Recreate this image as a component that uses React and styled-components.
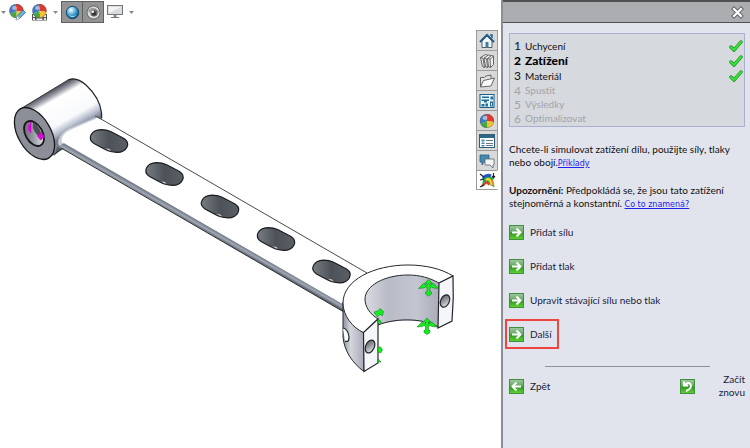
import React from "react";
import styled, { createGlobalStyle, css } from "styled-components";

const GlobalStyle = createGlobalStyle`
  * {
    box-sizing: border-box;
  }
  body {
    margin: 0;
    background: #ffffff;
    font-family: Lato, "Open Sans", sans-serif;
    font-size: 10px;
    font-variant-ligatures: none;
    color: #101014;
  }
  svg {
    display: block;
  }
`;

const Page = styled.div`
  display: flex;
  min-height: 100vh;
`;

const Workspace = styled.main`
  flex: 1;
  min-width: 0;
`;

const Toolbar = styled.div`
  display: flex;
  align-items: center;
  height: 24px;
`;

const ToolButton = styled.button`
  display: flex;
  align-items: center;
  justify-content: center;
  width: 22px;
  height: 22px;
  padding: 0;
  border: 0;
  background: none;
  ${(props) =>
    props.$pressed &&
    css`
      border: 1px solid #5f5f5f;
      background: #929394;
    `};
`;

const DropButton = styled(ToolButton)`
  width: ${(props) => (props.$wide ? "11px" : "6px")};
`;

const ToggleGroup = styled.div`
  display: flex;
  button:last-child {
    width: 21px;
    border-left: 0;
  }
`;

const Model = styled.svg`
  width: 100%;
  height: auto;
`;

const TabRail = styled.nav`
  display: flex;
  flex-direction: column;
  width: 25px;
  padding: 30px 3px 0 0;
`;

const Tab = styled.button`
  display: flex;
  align-items: center;
  justify-content: center;
  height: 20px;
  padding: 0;
  border: 1px solid #9b9b9b;
  border-bottom-width: ${(props) => (props.$active ? "1px" : "0")};
  border-right-color: ${(props) => (props.$active ? "#ffffff" : "#9b9b9b")};
  background: ${(props) => (props.$active ? "#ffffff" : "#d9d9d9")};
`;

const Panel = styled.aside`
  width: 249px;
  border-left: 2px solid #8b8e96;
  background: #e1e4ec;
`;

const TitleBar = styled.header`
  display: flex;
  align-items: center;
  justify-content: flex-end;
  height: 23px;
  padding-right: 6px;
  border-top: 2px solid #4f5052;
  border-bottom: 1px solid #4f5052;
  background: #acadb1;
`;

const CloseButton = styled.button`
  padding: 0;
  border: 0;
  background: none;
`;

const PanelBody = styled.div`
  padding: 10px 5px 0 6px;
`;

const Steps = styled.ol`
  margin: 0 0 16px;
  padding: 4px 1px 1px 4px;
  border: 1px solid #a9b0cf;
  background: #d6d9de;
  list-style: none;
`;

const Step = styled.li`
  display: flex;
  align-items: center;
  height: ${(props) => (props.$pending ? "14px" : "15px")};
  color: ${(props) => (props.$pending ? "#a2a4a8" : "#101014")};
  ${(props) =>
    props.$current &&
    css`
      color: #000000;
      font-size: 12px;
      font-weight: 900;
    `};
`;

const StepNumber = styled.span`
  width: 11px;
  font-size: 12px;
`;

const StepName = styled.span`
  flex: 1;
`;

const Notes = styled.section`
  display: flex;
  flex-direction: column;
  gap: 15px;
  margin-bottom: 7px;
`;

const Paragraph = styled.p`
  margin: 0;
  line-height: 13px;
`;

const HelpLink = styled.a`
  font-family: "DejaVu Sans", sans-serif;
  font-size: 8px;
  line-height: 8px;
  color: #2222ee;
`;

const Actions = styled.div`
  display: flex;
  flex-direction: column;
  align-items: flex-start;
  gap: 4px;
  margin: 0 0 17px -4px;
`;

const Action = styled.button`
  display: flex;
  align-items: center;
  gap: 6px;
  height: 30px;
  padding: 0 5px 0 2px;
  border: 2px solid ${(props) => (props.$marked ? "#ee463e" : "transparent")};
  background: none;
  color: #1b1b3a;
  font: inherit;
`;

const Divider = styled.hr`
  margin: 0 35px 6px 36px;
  border: 0;
  border-top: 1px solid #8d9097;
`;

const Footer = styled.footer`
  display: flex;
  justify-content: space-between;
`;

const FooterButton = styled.button`
  display: flex;
  align-items: center;
  gap: 6px;
  padding: 0;
  border: 0;
  background: none;
  color: #1b1b3a;
  font: inherit;
  line-height: 13px;
`;

const RestartLabel = styled.span`
  width: 44px;
  padding-left: 16px;
  text-align: right;
`;

const Caret = () => (
  <svg width="5" height="3" viewBox="0 0 5 3">
    <path d="M0 0h5L2.5 3z" fill="#8a8a8a" />
  </svg>
);

const Ball = ({ cx = 8, cy = 7, r = 7 }) => (
  <g transform={`translate(${cx} ${cy}) scale(${r / 7})`}>
    <path d="M0 0L-1-7A7 7 0 0 0-6.5 3z" fill="#4179c4" />
    <path d="M0 0L-1-7A7 7 0 0 1 7 1z" fill="#dc3b30" />
    <path d="M0 0L7 1A7 7 0 0 1 0 7z" fill="#f0c52f" />
    <path d="M0 0L0 7A7 7 0 0 1-6.5 3z" fill="#46a742" />
    <ellipse cx="-2" cy="-3" rx="2.5" ry="2" fill="#fff" opacity=".5" />
    <circle r="6.7" fill="none" stroke="#59606b" strokeWidth=".7" opacity=".6" />
  </g>
);

const AppearanceIcon = () => (
  <svg width="17" height="17" viewBox="0 0 17 17">
    <Ball cx={7.5} />
    <path d="M7 16l1.500-4L14 6l2.500 2.500-6 6z" fill="#6bb0dd" stroke="#34688f" strokeWidth=".8" />
    <path d="M7 16l1.500-4 2 2.500z" fill="#f1e4ca" />
  </svg>
);

const SceneIcon = () => (
  <svg width="17" height="17" viewBox="0 0 17 17">
    <path d="M1 10h15v6.500H1z" fill="#555" />
    <path d="M2 11h2v2H2zM2 14h2v2H2zM13 11h2v2h-2zM13 14h2v2h-2zM5.500 14.500h6V16h-6z" fill="#eee" />
    <Ball cx={8.5} />
  </svg>
);

const ShadedIcon = () => (
  <svg width="15" height="15" viewBox="0 0 15 15">
    <defs>
      <radialGradient id="blueBall" cx=".38" cy=".3" r=".75">
        <stop offset="0" stopColor="#fff" />
        <stop offset=".3" stopColor="#8bcdf0" />
        <stop offset=".7" stopColor="#2480b5" />
        <stop offset="1" stopColor="#164e74" />
      </radialGradient>
    </defs>
    <circle cx="7.500" cy="7.500" r="6.200" fill="url(#blueBall)" stroke="#15425f" />
    <path d="M3.500 10a5 5 0 0 0 8 0q-4 2-8 0z" fill="#9be0fa" />
  </svg>
);

const ShadowIcon = () => (
  <svg width="15" height="15" viewBox="0 0 15 15">
    <circle cx="7.500" cy="7.500" r="6.500" fill="#dedede" stroke="#666" />
    <path d="M2 5q5-5 11 1L12 9Q7 3 3 8z" fill="#a2a2a2" />
    <circle cx="8" cy="8" r="3.600" fill="#666" />
    <circle cx="8" cy="8.500" r="2" fill="#333" />
    <circle cx="6.700" cy="6.700" r="1.300" fill="#fff" />
  </svg>
);

const MonitorIcon = () => (
  <svg width="16" height="14" viewBox="0 0 16 14">
    <rect x=".5" y=".5" width="15" height="9" fill="#d9dde0" stroke="#777" />
    <path d="M2 2h12L2 8z" fill="#f2f4f5" />
    <path d="M6.500 10h3v2h-3z" fill="#888" />
    <path d="M4 12.500h8" stroke="#777" />
  </svg>
);

const HomeIcon = () => (
  <svg width="16" height="16" viewBox="0 0 16 16">
    <path d="M3 8l5-5 5 5v6.500H3z" fill="#f5f5f2" stroke="#546068" />
    <path d="M6.500 14.500V9h3v5.500z" fill="#397fa9" />
    <path d="M1 9l7-7 7 7" fill="none" stroke="#235d83" strokeWidth="2" />
    <path d="M11 2h2v3" fill="none" stroke="#235d83" strokeWidth="1.500" />
  </svg>
);

const LibraryIcon = () => (
  <svg width="16" height="16" viewBox="0 0 16 16" fill="#f0f0f0" stroke="#555" strokeWidth=".9">
    <path d="M1.500 4.500l5-3 2 .5v10l-3 2.500-2-1z" />
    <path d="M5 5l4.500-3 2 .5V12l-3 2.500-2-1z" />
    <path d="M8.500 5.500l4-3 2 .5v8.500l-3 3-2-1z" />
    <path d="M1.500 4.500l2.500.7 1.500 9.300M5 5l2.500.8 1 8.700M8.500 5.500l2.500.7.5 8.300M11 6.200l3.500-3" fill="none" />
  </svg>
);

const FolderIcon = () => (
  <svg width="16" height="16" viewBox="0 0 16 16" fill="#e4e4e4" stroke="#666">
    <path d="M1.500 14V4.500h4L7 3l5-1v3l1 1" />
    <path d="M1.500 14L4.500 7.500l11-2.500L12 13z" fill="#fafafa" />
  </svg>
);

const PaletteIcon = () => (
  <svg width="16" height="16" viewBox="0 0 16 16">
    <rect x="1" y="1.500" width="14" height="13" fill="#e8f7fc" stroke="#1d5f85" />
    <path d="M3 3.500h7V5H3zM11.500 3.500H14v3h-2.500zM2.500 6.500H10V8H2.500zM5 8h3v1.500H5zM2.500 11h3v2.500h-3zM6.500 10.500H9v3H6.500zM11 8.500h3v5h-3z" fill="#1d6f9c" />
    <path d="M12 10h1v2.500h-1z" fill="#e8f7fc" />
  </svg>
);

const BallIcon = () => (
  <svg width="16" height="16" viewBox="0 0 16 16">
    <Ball cy={8} />
  </svg>
);

const PropertiesIcon = () => (
  <svg width="16" height="16" viewBox="0 0 16 16">
    <rect x=".5" y="1.500" width="15" height="13" fill="#fff" stroke="#315d78" />
    <path d="M1 2h14v3H1z" fill="#2e6688" />
    <path d="M2.500 6.500h3v2h-3zM2.500 9.500h3v1.500h-3zM2.500 12h3v1.500h-3z" fill="#3b8ab5" />
    <path d="M7 7.500h7M7 10.500h7M7 12.500h7" stroke="#678" />
  </svg>
);

const ForumIcon = () => (
  <svg width="16" height="16" viewBox="0 0 16 16">
    <path d="M1 2h9v7H5l-2 3V9H1z" fill="#438bb2" stroke="#285d7b" strokeWidth=".8" />
    <path d="M6 6h9v6h-1v3l-3-3H6z" fill="#f5f5f5" stroke="#56646e" strokeWidth=".8" />
  </svg>
);

const SimulationIcon = () => (
  <svg width="17" height="17" viewBox="0 0 17 17" fill="none">
    <path d="M3 6Q8 1 14 6L15 15L11 13Q9 9 6 11L2 14Q5 10 3 6z" fill="#2aa84a" />
    <path d="M4 6Q8 2 12 4" stroke="#2753c5" strokeWidth="3" />
    <path d="M7 8Q11 5 13 13" stroke="#f1d62d" strokeWidth="2.500" />
    <path d="M3 14l5-4 2 3" stroke="#e4372c" strokeWidth="2" />
    <path d="M1 2l4 3M1 8l4-1M1 15l4-2M14.500 1v5m-1.500-2l1.500 2L16 4" stroke="#222" strokeWidth="1.200" />
    <path d="M13 8l2 7" stroke="#e78425" strokeWidth="1.500" />
  </svg>
);

const CloseIcon = () => (
  <svg width="13" height="13" viewBox="0 0 13 13">
    <path d="M3 3l7 7M10 3l-7 7" stroke="#66676b" strokeWidth="4.200" strokeLinecap="square" />
    <path d="M3 3l7 7M10 3l-7 7" stroke="#fff" strokeWidth="2.200" strokeLinecap="square" />
  </svg>
);

const CheckIcon = () => (
  <svg width="14" height="12" viewBox="0 0 14 12" fill="none">
    <path d="M2 7l3 3 7-8" stroke="#198a1c" strokeWidth="3.400" strokeLinecap="round" />
    <path d="M2 7l3 3 7-8" stroke="#3be33c" strokeWidth="2" strokeLinecap="round" />
  </svg>
);

const arrows = {
  next: "M3 7.500h8M7.500 3.500l4 4-4 4",
  back: "M12 7.500H4M7.500 3.500l-4 4 4 4",
  restart: "M4 2.500v4h4M4.500 6Q8 2.500 10.500 5Q12.500 9.500 6 12",
};

const ArrowIcon = ({ kind }) => (
  <svg width="15" height="15" viewBox="0 0 15 15">
    <defs>
      <linearGradient id={`green-${kind}`} x2="0" y2="1">
        <stop offset="0" stopColor="#a3c8a3" />
        <stop offset=".48" stopColor="#5fa85c" />
        <stop offset=".52" stopColor="#2f9423" />
        <stop offset="1" stopColor="#60d534" />
      </linearGradient>
    </defs>
    <rect x=".5" y=".5" width="14" height="14" fill={`url(#green-${kind})`} stroke="#3f8f3d" />
    <path d={arrows[kind]} fill="none" stroke="#fff" strokeWidth="2" />
  </svg>
);

const slots = [
  [109, 141],
  [164.5, 174],
  [220, 206.5],
  [276, 239],
  [331.5, 271.5],
];

const SLOT_PATH =
  "M1-9.800Q3-9 15-2.500A11 8 0 0 1 8 11.400Q2 11 -1 9.800Q-3 9-15 2.500A11 8 0 0 1-8-11.400Q-2-11 1-9.800z";

// Fixture symbol: two side heads, one up, and the stud below
const Fixture = ({ x, y }) => (
  <g transform={`translate(${x} ${y})`} fill="#12ee20" stroke="#14861b" strokeWidth=".6">
    <path d="M0-7.500l4 4H1.500v2L5-3.500l5 5L5 1 3 0 1.500.5V5H3v2L0 9l-3-2V5h1.500V.5L-3 0l-2 1-5 .5 5-5 3.500 2v-2H-4z" />
  </g>
);

const PartModel = () => (
  <Model viewBox="0 24 476 424" role="img" aria-label="Model dílu">
    <defs>
      <linearGradient id="boss" gradientUnits="userSpaceOnUse" x1="44" y1="95" x2="72" y2="144">
        <stop offset="0" stopColor="#565a64" />
        <stop offset=".08" stopColor="#9a9da6" />
        <stop offset=".17" stopColor="#ffffff" />
        <stop offset=".58" stopColor="#f8f9fc" />
        <stop offset=".72" stopColor="#b3bac9" />
        <stop offset=".82" stopColor="#747b8c" />
        <stop offset="1" stopColor="#848b9a" />
      </linearGradient>
      <linearGradient id="slot" x1="0" y1="0" x2="1" y2="0">
        <stop offset="0" stopColor="#787c83" />
        <stop offset=".5" stopColor="#4d5158" />
        <stop offset="1" stopColor="#5b5f66" />
      </linearGradient>
      <linearGradient id="edge" gradientUnits="userSpaceOnUse" x1="203" y1="221" x2="199" y2="228">
        <stop offset="0" stopColor="#cdd1d9" />
        <stop offset=".3" stopColor="#737b88" />
        <stop offset=".65" stopColor="#a2a9b5" />
        <stop offset="1" stopColor="#5a606b" />
      </linearGradient>
      <linearGradient id="bore" x1="0" y1="0" x2="1" y2="0">
        <stop offset="0" stopColor="#dadbe2" />
        <stop offset=".3" stopColor="#b9bcc7" />
        <stop offset=".7" stopColor="#c3c6d0" />
        <stop offset="1" stopColor="#a9acb9" />
      </linearGradient>
      <linearGradient id="side" x1="0" y1="0" x2="1" y2="0">
        <stop offset="0" stopColor="#8b8f9c" />
        <stop offset=".35" stopColor="#d4d6de" />
        <stop offset="1" stopColor="#a7aab6" />
      </linearGradient>
      <linearGradient id="pin" x1="0" y1="0" x2="1" y2="1">
        <stop offset="0" stopColor="#54565c" />
        <stop offset=".5" stopColor="#9c9ea5" />
        <stop offset="1" stopColor="#ffffff" />
      </linearGradient>
    </defs>

    {/* boss */}
    <path d="M20.300 109L68 80A16.400 28.400-30 0 1 96 130L48.700 158z" fill="url(#boss)" />
    <path d="M20.300 109L68 80" fill="none" stroke="#33353b" />
    <path d="M68 80Q76 76 86 85Q100 98 101.500 113V118" fill="none" stroke="#22242a" strokeWidth="1.200" />

    {/* arm */}
    <path d="M97 117L369 274.500L347 311L62 147Q56 144 60 137Q63 131 70 128z" fill="#ffffff" />
    <path d="M96 117Q82 123 71 128Q61 132 60 140Q60 145 66 147" fill="none" stroke="#a4abba" strokeWidth="3" opacity=".6" />
    <path d="M64 143L346 306V313L62 148L54 156L57 147z" fill="url(#edge)" />
    <path d="M53 155L62 148.500L344 312" fill="none" stroke="#25282e" />
    <path d="M95 116L101 119L367 273" fill="none" stroke="#33363b" strokeWidth=".9" />

    <ellipse cx="34.500" cy="133.500" rx="16.400" ry="28.400" transform="rotate(-30 34.500 133.500)" fill="#8c8f98" stroke="#17181c" strokeWidth="1.300" />
    <ellipse cx="34" cy="133.500" rx="8.500" ry="13.500" transform="rotate(-30 34 133.500)" fill="url(#pin)" stroke="#17181c" strokeWidth="1.800" />
    <path d="M33 122Q41 127 42 138Q36 136 33 128z" fill="#4d4f56" />
    <path d="M30.500 122v11M29 125v6M41 132v8M38 136l3.500-2 2 3-3 2z" fill="none" stroke="#dd00dd" strokeWidth="1.500" />

    {slots.map(([x, y]) => (
      <g key={x} transform={`translate(${x} ${y})`}>
        <path d={SLOT_PATH} fill="url(#slot)" stroke="#1b1c20" strokeWidth="1.200" />
        <path d="M-5 7l5 2.500 3 .5-3-2.500z" fill="#e5e6ea" stroke="#333" strokeWidth=".5" />
      </g>
    ))}

    {/* clamp */}
    <path d="M365 299C365 286 384 275 408 275C420 275 430 278 439 283V328C428 319 398 318 378 325C370 318 365 310 365 299z" fill="url(#bore)" />
    <path d="M378 325C398 317 426 319 438 327" fill="none" stroke="#24262b" />
    <path d="M343 302V337C344 350 352 363 364 371.500V333C354 327 343 316 343 302z" fill="url(#side)" stroke="#282a30" />
    <path d="M343 303C343 280 374 265 408 265C426 265 442 269 453 276L439 283C430 278 420 275 408 275C384 275 365 286 365 299C365 307 370 314 378 319L363.500 332.500C353 328 343 316 343 303z" fill="#ffffff" stroke="#24262b" />
    <path d="M363.500 332.500L378 319V363L364 371.500z" fill="#f5f6f9" stroke="#24262b" strokeWidth="1.200" />
    <path d="M439 283L453 276Q454 298 452 321L438 328z" fill="#f5f6f9" stroke="#24262b" strokeWidth="1.200" />
    <ellipse cx="445" cy="301" rx="4.300" ry="6.500" transform="rotate(25 445 301)" fill="url(#pin)" stroke="#202227" strokeWidth="1.200" />
    <ellipse cx="370" cy="346.500" rx="4.300" ry="6.800" transform="rotate(25 370 346.500)" fill="url(#pin)" stroke="#202227" strokeWidth="1.200" />
    <path d="M343 328Q348 329 349 337Q349 343 345 341" fill="#ffffff" stroke="#202227" strokeWidth="1.200" />

    <Fixture x={428.5} y={287} />
    <Fixture x={427} y={325.500} />
    <path d="M374 312l4-1 2-2.500 3.500 3-1 4-3-1-2 2.500-2-2.500zM378 320l2 0 1.500 3-3.500 0zM378 347l2.500 0 2 3-2 3-2.500-1zM378 359l3 3h-3z" fill="#12ee20" stroke="#14861b" strokeWidth=".6" />
  </Model>
);

const steps = [
  { name: "Uchycení", done: true },
  { name: "Zatížení", done: true, current: true },
  { name: "Materiál", done: true },
  { name: "Spustit" },
  { name: "Výsledky" },
  { name: "Optimalizovat" },
];

const tabs = [
  { name: "Zdroje", Icon: HomeIcon },
  { name: "Knihovna návrhů", Icon: LibraryIcon },
  { name: "Průzkumník souborů", Icon: FolderIcon },
  { name: "Paleta pohledů", Icon: PaletteIcon },
  { name: "Vzhledy", Icon: BallIcon },
  { name: "Vlastnosti", Icon: PropertiesIcon },
  { name: "Fórum", Icon: ForumIcon },
  { name: "Simulace", Icon: SimulationIcon, active: true },
];

const App = () => (
  <Page>
    <GlobalStyle />
    <Workspace>
      <Toolbar>
        <DropButton aria-label="Styl zobrazení">
          <Caret />
        </DropButton>
        <ToolButton aria-label="Upravit vzhled">
          <AppearanceIcon />
        </ToolButton>
        <ToolButton aria-label="Použít scénu">
          <SceneIcon />
        </ToolButton>
        <DropButton $wide aria-label="Další scény">
          <Caret />
        </DropButton>
        <ToggleGroup>
          <ToolButton $pressed aria-label="Stínování">
            <ShadedIcon />
          </ToolButton>
          <ToolButton $pressed aria-label="Okluze">
            <ShadowIcon />
          </ToolButton>
        </ToggleGroup>
        <ToolButton aria-label="Nastavení pohledu">
          <MonitorIcon />
        </ToolButton>
        <DropButton $wide aria-label="Další pohledy">
          <Caret />
        </DropButton>
      </Toolbar>
      <PartModel />
    </Workspace>
    <TabRail>
      {tabs.map(({ name, Icon, active }) => (
        <Tab key={name} $active={active} aria-label={name}>
          <Icon />
        </Tab>
      ))}
    </TabRail>
    <Panel>
      <TitleBar>
        <CloseButton aria-label="Zavřít">
          <CloseIcon />
        </CloseButton>
      </TitleBar>
      <PanelBody>
        <Steps>
          {steps.map(({ name, done, current }, i) => (
            <Step key={name} $pending={!done} $current={current}>
              <StepNumber>{i + 1}</StepNumber>
              <StepName>{name}</StepName>
              {done && <CheckIcon />}
            </Step>
          ))}
        </Steps>
        <Notes>
          <Paragraph>
            Chcete-li simulovat zatížení dílu, použijte síly, tlaky nebo obojí.
            <HelpLink href="#priklady">Příklady</HelpLink>
          </Paragraph>
          <Paragraph>
            <b>Upozornění:</b> Předpokládá se, že jsou tato zatížení stejnoměrná
            a konstantní. <HelpLink href="#vyznam">Co to znamená?</HelpLink>
          </Paragraph>
        </Notes>
        <Actions>
          <Action>
            <ArrowIcon kind="next" />
            Přidat sílu
          </Action>
          <Action>
            <ArrowIcon kind="next" />
            Přidat tlak
          </Action>
          <Action>
            <ArrowIcon kind="next" />
            Upravit stávající sílu nebo tlak
          </Action>
          <Action $marked>
            <ArrowIcon kind="next" />
            Další
          </Action>
        </Actions>
        <Divider />
        <Footer>
          <FooterButton>
            <ArrowIcon kind="back" />
            Zpět
          </FooterButton>
          <FooterButton>
            <ArrowIcon kind="restart" />
            <RestartLabel>Začít znovu</RestartLabel>
          </FooterButton>
        </Footer>
      </PanelBody>
    </Panel>
  </Page>
);

export default App;
